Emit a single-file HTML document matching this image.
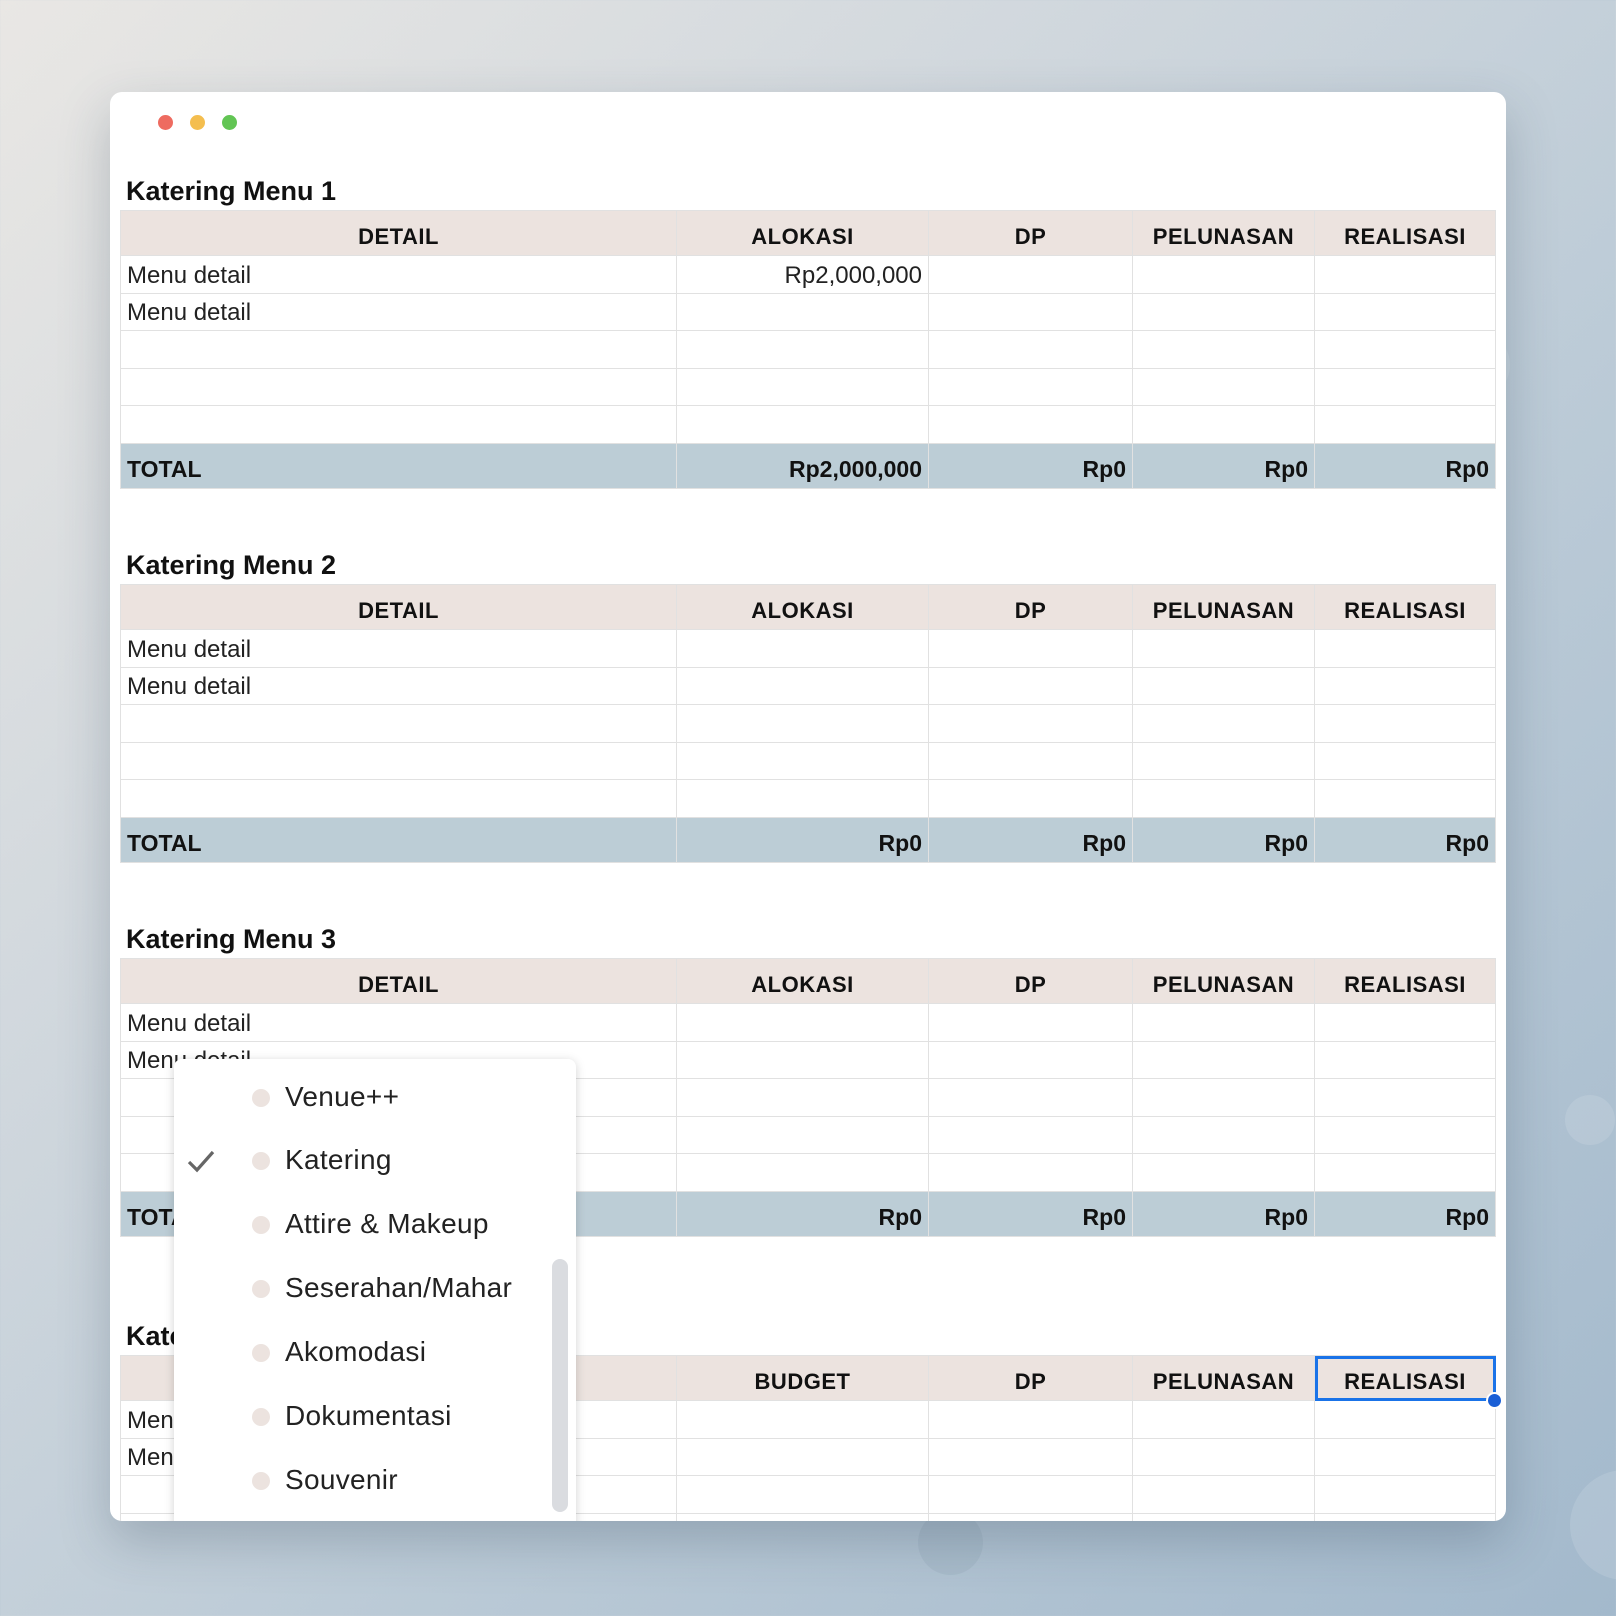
<!DOCTYPE html>
<html><head><meta charset="utf-8"><style>
*{margin:0;padding:0;box-sizing:border-box}
body{width:1616px;height:1616px;overflow:hidden;position:relative;font-family:"Liberation Sans",sans-serif;
background:linear-gradient(135deg,#e9e7e4 0%,#d3d9de 30%,#bccbd7 60%,#a3b9cc 100%);}
.circ{position:absolute;border-radius:50%;background:rgba(255,255,255,0.12)}
.win{position:absolute;left:110px;top:92px;width:1396px;height:1429px;background:#fff;border-radius:12px;overflow:hidden;box-shadow:0 20px 50px rgba(40,60,80,0.25)}
.dot{position:absolute;top:115px;width:15px;height:15px;border-radius:50%}
.title{position:absolute;left:126px;font-size:27px;font-weight:bold;color:#111}
table{position:absolute;left:120px;width:1375px;border-collapse:collapse;table-layout:fixed;font-size:24px;color:#222}
td{border:1.5px solid #e1e1e1;padding:3px 6px 0;white-space:nowrap;overflow:hidden}
tr.h td{background:#ece3df;height:45px;font-weight:bold;text-align:center;color:#111;letter-spacing:0.5px;font-size:22px;padding-top:8px}
tr.r td{height:37.5px}
tr.t td{background:#bccdd6;height:45px;font-weight:bold;text-align:right;color:#111;font-size:23px;padding-top:8px}
tr.t td:first-child{text-align:left}
.num{text-align:right}
.clip{position:absolute;left:110px;top:92px;width:1396px;height:1429px;overflow:hidden;border-radius:12px}
.dd{position:absolute;left:64px;top:967px;width:402px;height:470px;background:#fff;border-radius:8px;box-shadow:0 2px 10px rgba(0,0,0,0.18)}
.it{position:absolute;left:111px;font-size:28px;color:#222;letter-spacing:0.3px}
.bd{position:absolute;left:78px;width:18px;height:18px;border-radius:50%;background:#ece3df}
</style></head><body>
<div class="circ" style="left:1440px;top:330px;width:70px;height:70px"></div>
<div class="circ" style="left:1565px;top:1095px;width:50px;height:50px"></div>
<div class="circ" style="left:1570px;top:1470px;width:110px;height:110px"></div>
<div class="circ" style="left:918px;top:1510px;width:65px;height:65px;background:rgba(120,140,160,0.15)"></div>
<div class="win"></div>
<div class="dot" style="left:158px;background:#ee6b60"></div>
<div class="dot" style="left:190px;background:#f4be4f"></div>
<div class="dot" style="left:222px;background:#62c554"></div>

<div class="title" style="top:176px">Katering Menu 1</div>
<table style="top:210px"><colgroup><col style="width:556px"><col style="width:252px"><col style="width:204px"><col style="width:182px"><col style="width:181px"></colgroup>
<tr class="h"><td>DETAIL</td><td>ALOKASI</td><td>DP</td><td>PELUNASAN</td><td>REALISASI</td></tr>
<tr class="r"><td>Menu detail</td><td class="num">Rp2,000,000</td><td></td><td></td><td></td></tr>
<tr class="r"><td>Menu detail</td><td></td><td></td><td></td><td></td></tr>
<tr class="r"><td></td><td></td><td></td><td></td><td></td></tr>
<tr class="r"><td></td><td></td><td></td><td></td><td></td></tr>
<tr class="r"><td></td><td></td><td></td><td></td><td></td></tr>
<tr class="t"><td>TOTAL</td><td>Rp2,000,000</td><td>Rp0</td><td>Rp0</td><td>Rp0</td></tr>
</table>

<div class="title" style="top:550px">Katering Menu 2</div>
<table style="top:584px"><colgroup><col style="width:556px"><col style="width:252px"><col style="width:204px"><col style="width:182px"><col style="width:181px"></colgroup>
<tr class="h"><td>DETAIL</td><td>ALOKASI</td><td>DP</td><td>PELUNASAN</td><td>REALISASI</td></tr>
<tr class="r"><td>Menu detail</td><td></td><td></td><td></td><td></td></tr>
<tr class="r"><td>Menu detail</td><td></td><td></td><td></td><td></td></tr>
<tr class="r"><td></td><td></td><td></td><td></td><td></td></tr>
<tr class="r"><td></td><td></td><td></td><td></td><td></td></tr>
<tr class="r"><td></td><td></td><td></td><td></td><td></td></tr>
<tr class="t"><td>TOTAL</td><td>Rp0</td><td>Rp0</td><td>Rp0</td><td>Rp0</td></tr>
</table>

<div class="title" style="top:924px">Katering Menu 3</div>
<table style="top:958px"><colgroup><col style="width:556px"><col style="width:252px"><col style="width:204px"><col style="width:182px"><col style="width:181px"></colgroup>
<tr class="h"><td>DETAIL</td><td>ALOKASI</td><td>DP</td><td>PELUNASAN</td><td>REALISASI</td></tr>
<tr class="r"><td>Menu detail</td><td></td><td></td><td></td><td></td></tr>
<tr class="r"><td>Menu detail</td><td></td><td></td><td></td><td></td></tr>
<tr class="r"><td></td><td></td><td></td><td></td><td></td></tr>
<tr class="r"><td></td><td></td><td></td><td></td><td></td></tr>
<tr class="r"><td></td><td></td><td></td><td></td><td></td></tr>
<tr class="t"><td>TOTAL</td><td>Rp0</td><td>Rp0</td><td>Rp0</td><td>Rp0</td></tr>
</table>

<div class="title" style="top:1321px">Katering Menu 4</div>
<div style="position:absolute;left:110px;top:1300px;width:1396px;height:221px;overflow:hidden;border-radius:0 0 12px 12px">
<table style="top:55px;left:10px"><colgroup><col style="width:556px"><col style="width:252px"><col style="width:204px"><col style="width:182px"><col style="width:181px"></colgroup>
<tr class="h"><td>DETAIL</td><td>BUDGET</td><td>DP</td><td>PELUNASAN</td><td style="outline:3px solid #1a73e8;outline-offset:-3px">REALISASI</td></tr>
<tr class="r"><td>Menu detail</td><td></td><td></td><td></td><td></td></tr>
<tr class="r"><td>Menu detail</td><td></td><td></td><td></td><td></td></tr>
<tr class="r"><td></td><td></td><td></td><td></td><td></td></tr>
<tr class="r"><td></td><td></td><td></td><td></td><td></td></tr>
</table></div>
<div style="position:absolute;left:1486px;top:1392px;width:17px;height:17px;border-radius:50%;background:#1a5fd6;border:2px solid #fff"></div>

<div class="clip">
<div class="dd">
<svg style="position:absolute;left:12px;top:89px" width="30" height="26" viewBox="0 0 30 26"><path d="M3 14 L11 22 L27 4" fill="none" stroke="#666" stroke-width="3.2"/></svg>
<div class="bd" style="top:30px"></div><div class="it" style="top:22px">Venue++</div>
<div class="bd" style="top:93px"></div><div class="it" style="top:85px">Katering</div>
<div class="bd" style="top:157px"></div><div class="it" style="top:149px">Attire &amp; Makeup</div>
<div class="bd" style="top:221px"></div><div class="it" style="top:213px">Seserahan/Mahar</div>
<div class="bd" style="top:285px"></div><div class="it" style="top:277px">Akomodasi</div>
<div class="bd" style="top:349px"></div><div class="it" style="top:341px">Dokumentasi</div>
<div class="bd" style="top:413px"></div><div class="it" style="top:405px">Souvenir</div>
<div style="position:absolute;left:378px;top:200px;width:16px;height:253px;border-radius:8px;background:#dadce0"></div>
</div>
</div>
</body></html>
